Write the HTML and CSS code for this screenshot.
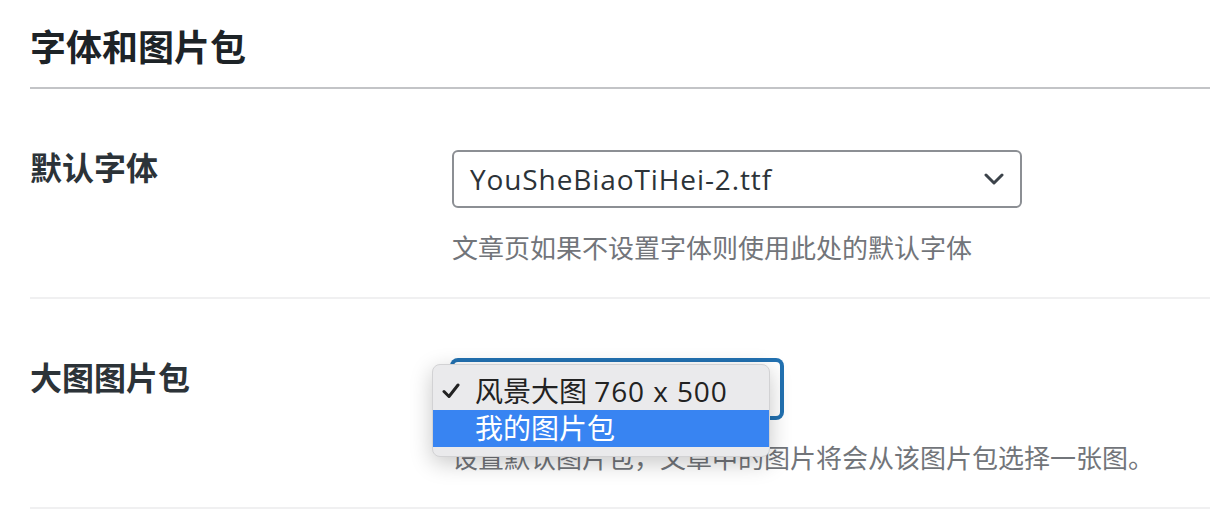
FILE: index.html
```html
<!DOCTYPE html>
<html>
<head>
  <title>字体和图片包</title>
  <link rel="stylesheet" href="styles.css">
</head>
<body>

  <div class="wrap">
    <h2 class="section-title">字体和图片包</h2>

    <!-- Default font -->
    <div class="row">
      <div class="label">默认字体</div>
      <div class="field">
        <div class="select wide">
          <span class="latin">YouSheBiaoTiHei-2.ttf</span>
          <svg class="chevron" width="20" height="12" viewBox="0 0 20 12">
            <polyline points="2,2 10,10 18,2" fill="none" stroke="#3c434a" stroke-width="3" stroke-linecap="round" stroke-linejoin="round"/>
          </svg>
        </div>
        <p class="desc">文章页如果不设置字体则使用此处的默认字体</p>
      </div>
    </div>

    <!-- Big picture pack -->
    <div class="row">
      <div class="label">大图图片包</div>
      <div class="field">
        <div class="select-wrap">
          <div class="select narrow focused">
            <span>风景大图 <span class="latin">760 x 500</span></span>
            <svg class="chevron" width="20" height="12" viewBox="0 0 20 12">
              <polyline points="2,2 10,10 18,2" fill="none" stroke="#3c434a" stroke-width="3" stroke-linecap="round" stroke-linejoin="round"/>
            </svg>
          </div>
          <ul class="menu">
            <li class="checked">
              <svg class="check" width="18" height="16" viewBox="0 0 18 16">
                <polyline points="2,8.5 7,13.5 16,2" fill="none" stroke="#222" stroke-width="3" stroke-linecap="round" stroke-linejoin="round"/>
              </svg>风景大图 <span class="latin">760 x 500</span>
            </li>
            <li class="active">我的图片包</li>
          </ul>
        </div>
        <p class="desc">设置默认图片包，文章中的图片将会从该图片包选择一张图。</p>
      </div>
    </div>
  </div>

</body>
</html>
```

FILE: styles.css
```css
body {
  margin: 0;
  font-family: "Open Sans", "Noto Sans CJK SC", sans-serif;
  background: #fff;
  color: #1d2327;
}

.wrap {
  padding-left: 30px;
}

.section-title {
  margin: 0;
  padding: 23px 0 15px;
  font-size: 36px;
  line-height: 49px;
  font-weight: 700;
  border-bottom: 2px solid #c3c4c7;
}

.row {
  display: grid;
  grid-template-columns: 422px 1fr;
  padding: 61px 0 29px;
  border-bottom: 2px solid #f0f0f1;
}

.label {
  font-size: 32px;
  line-height: 36px;
  font-weight: 700;
  color: #2c3338;
}

.select {
  box-sizing: border-box;
  height: 58px;
  display: flex;
  align-items: center;
  justify-content: space-between;
  padding: 0 16px 0 16px;
  border: 2px solid #8c8f94;
  border-radius: 6px;
  font-size: 28px;
  color: #2c3338;
  background: #fff;
}

.latin {
  letter-spacing: 0.9px;
}

.wide {
  width: 570px;
}

.narrow {
  width: 330px;
}

.focused {
  border-color: #2271b1;
  box-shadow: 0 0 0 2px #2271b1;
}

.select-wrap {
  position: relative;
  width: 330px;
}

.menu {
  position: absolute;
  left: -20px;
  top: 4px;
  width: 338px;
  box-sizing: border-box;
  margin: 0;
  padding: 8px 0 9px;
  list-style: none;
  background: #eaeaec;
  border: 1px solid #d2d2d4;
  border-radius: 8px;
  box-shadow: 0 6px 22px rgba(0, 0, 0, 0.22);
}

.menu li {
  position: relative;
  height: 37px;
  line-height: 37px;
  padding-left: 42px;
  font-size: 28px;
  color: #222;
}

.menu .check {
  position: absolute;
  left: 9px;
  top: 10px;
}

.menu .active {
  background: #3884f2;
  color: #fff;
}

.desc {
  margin: 20px 0 0;
  font-size: 26px;
  line-height: 40px;
  color: #72757a;
}
```
